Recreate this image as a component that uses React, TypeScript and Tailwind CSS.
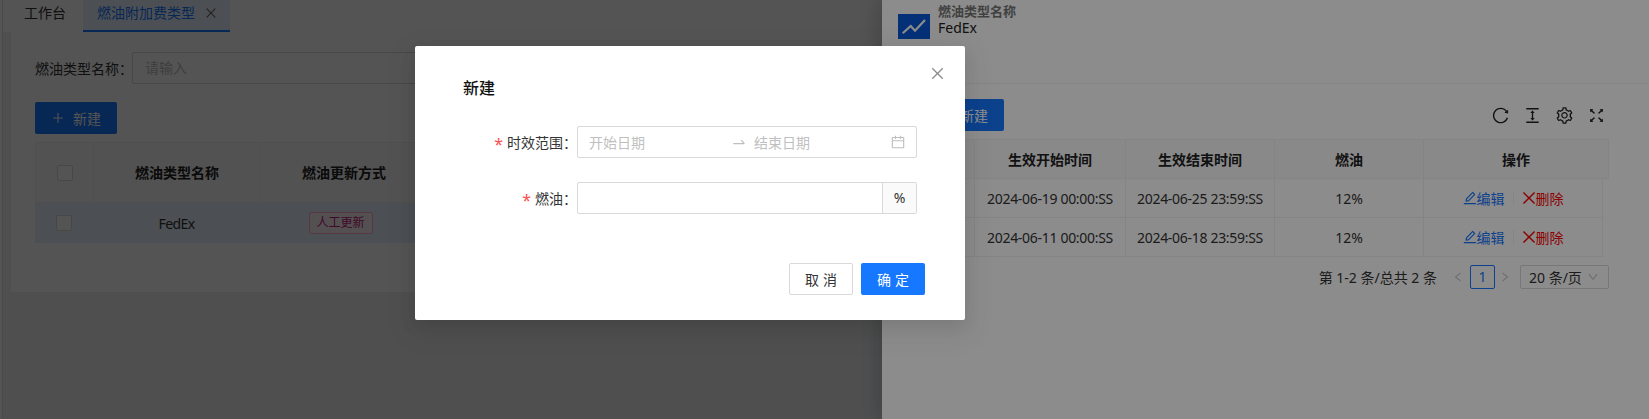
import React from "react";
import {
  AiOutlineClose,
  AiOutlinePlus,
  AiOutlineCalendar,
  AiOutlineSwapRight,
  AiOutlineReload,
  AiOutlineColumnHeight,
  AiOutlineSetting,
  AiOutlineFullscreen,
  AiOutlineEdit,
  AiOutlineLeft,
  AiOutlineRight,
  AiOutlineDown,
} from "react-icons/ai";

const rows = [
  ["2024-06-19 00:00:SS", "2024-06-25 23:59:SS"],
  ["2024-06-11 00:00:SS", "2024-06-18 23:59:SS"],
];

function Check() {
  return <span className="block w-4 h-4 rounded-[2px] border border-[#d9d9d9] bg-white" />;
}

function Base() {
  return (
    <div className="flex w-full h-full">
      <div className="w-[3px] shrink-0 bg-white border-r border-[#e4e4e4]" />
      <div className="flex flex-col flex-1">
        <div className="flex h-8 shrink-0 bg-white">
          <div className="w-[80px] pl-[21px] pt-[3px] text-[14px] leading-5 text-[#333]">工作台</div>
          <div className="flex items-start w-[147px] pl-[14px] pt-[3px] h-8 bg-[#e6f4ff] border-b-2 border-[#1677ff] text-[#1677ff] text-[14px] leading-5">
            <span>燃油附加费类型</span>
            <AiOutlineClose className="ml-[9px] mt-[3px] text-[14px] text-[#666]" />
          </div>
        </div>
        <div className="pl-2 pt-0">
          <div className="w-[1000px] h-[260px] bg-white pl-[24px] pt-5">
            <div className="flex items-center h-8">
              <span className="w-[97px] shrink-0 whitespace-nowrap text-[14px] text-[#333]">燃油类型名称：</span>
              <div className="w-[400px] h-8 border border-[#d9d9d9] rounded-[2px] px-3 text-[14px] leading-[30px] text-[#bfbfbf]">请输入</div>
            </div>
            <button className="flex items-center justify-center gap-2 mt-[18px] w-[82px] h-8 bg-[#1677ff] rounded-[2px] text-white text-[14px]">
              <AiOutlinePlus className="text-[14px]" />
              新建
            </button>
            <div className="mt-2 flex h-[61px] bg-[#fafafa] border border-[#f0f0f0] w-[700px] text-[14px] font-semibold text-[#222]">
              <div className="w-[58px] flex items-center justify-center border-r border-[#f0f0f0]"><Check /></div>
              <div className="w-[167px] flex items-center justify-center border-r border-[#f0f0f0]">燃油类型名称</div>
              <div className="w-[167px] flex items-center justify-center border-r border-[#f0f0f0]">燃油更新方式</div>
            </div>
            <div className="flex h-10 bg-[#e6f4ff] w-[700px] text-[14px] text-[#333]">
              <div className="w-[58px] flex items-center justify-center"><Check /></div>
              <div className="w-[167px] flex items-center justify-center tracking-[-0.6px]">FedEx</div>
              <div className="w-[167px] flex items-center justify-center pr-[6px]">
                <span className="w-16 h-[22px] border border-[#ffadd2] bg-[#fff0f6] rounded-[2px] text-[#c41d7f] text-[12px] leading-5 text-center">人工更新</span>
              </div>
            </div>
          </div>
        </div>
      </div>
    </div>
  );
}

function Drawer() {
  const line = "border-r border-[#f0f0f0]";
  return (
    <div className="absolute top-0 right-0 bottom-0 w-[767px] bg-white shadow-[-6px_0_16px_rgba(0,0,0,0.15)]">
      <div className="h-[84px] border-b border-[#f0f0f0] pl-4 flex items-start">
        <svg viewBox="0 0 32 25" className="w-8 h-[25px] mt-[14px] shrink-0">
          <rect width="32" height="25" fill="#0958d9" />
          <path d="M4.7 19.3 L12.7 12 L17 16.7 L27 6" fill="none" stroke="#ffffff" strokeWidth="2.2" />
        </svg>
        <div className="ml-2 text-[14px]">
          <div className="text-[13px] leading-4 mt-[3px] font-semibold text-[#777]">燃油类型名称</div>
          <div className="leading-5 text-[#222] mt-[-1px]">FedEx</div>
        </div>
      </div>
      <div className="pl-4 pr-10 pt-[15px]">
        <div className="flex items-center h-8">
          <button className="flex items-center justify-end gap-2 pr-4 w-[106px] h-8 bg-[#1677ff] rounded-[2px] text-white text-[14px]">
            <AiOutlinePlus />
            新建
          </button>
          <div className="ml-auto flex items-center gap-[13px] mr-[3px] text-[19px] text-[#222]">
            <AiOutlineReload />
            <AiOutlineColumnHeight />
            <AiOutlineSetting />
            <AiOutlineFullscreen />
          </div>
        </div>
        <div className="mt-2 flex h-10 bg-[#fafafa] border border-[#f0f0f0] text-[14px] font-semibold text-[#222]">
          <div className={`w-[76px] ${line}`} />
          <div className={`w-[151px] flex items-center justify-center ${line}`}>生效开始时间</div>
          <div className={`w-[149px] flex items-center justify-center ${line}`}>生效结束时间</div>
          <div className={`w-[149px] flex items-center justify-center ${line}`}>燃油</div>
          <div className="flex-1 flex items-center justify-center">操作</div>
        </div>
        {rows.map((r) => (
          <div key={r[0]} className="flex h-[39px] mr-[6px] border-x border-b border-[#f0f0f0] text-[14px] text-[#333]">
            <div className={`w-[76px] ${line}`} />
            <div className={`w-[151px] flex items-center justify-center tracking-[-0.3px] ${line}`}>{r[0]}</div>
            <div className={`w-[149px] flex items-center justify-center tracking-[-0.3px] ${line}`}>{r[1]}</div>
            <div className={`w-[149px] flex items-center justify-center ${line}`}>12%</div>
            <div className="flex-1 flex items-center justify-center">
              <span className="flex items-center text-[#1677ff]"><AiOutlineEdit className="text-[16px] -mx-px" />编辑</span>
              <span className="w-px h-[14px] bg-[#f0f0f0] mx-2" />
              <span className="flex items-center text-[#ff0000]"><AiOutlineClose className="text-[18px] -mx-[2px]" />删除</span>
            </div>
          </div>
        ))}
        <div className="flex items-center justify-end h-6 mt-2 text-[14px] text-[#333]">
          <span>第 1-2 条/总共 2 条</span>
          <AiOutlineLeft className="ml-[15px] text-[12px] text-[#bfbfbf]" />
          <span className="ml-[6px] w-[25px] h-6 border border-[#1677ff] rounded-[2px] text-[#1677ff] text-center leading-[22px]">1</span>
          <AiOutlineRight className="ml-[4px] text-[12px] text-[#bfbfbf]" />
          <span className="ml-[9px] flex items-center w-[89px] h-6 border border-[#d9d9d9] rounded-[2px] pl-2">
            20 条/页
            <AiOutlineDown className="ml-[5px] text-[12px] text-[#bfbfbf]" />
          </span>
        </div>
      </div>
    </div>
  );
}

function Star() {
  return <span className="text-[#ff4d4f] mr-1 text-[16px] leading-none align-[-2px]">*</span>;
}

function Modal() {
  return (
    <div className="absolute left-[415px] top-[46px] w-[550px] h-[274px] bg-white rounded-[2px] shadow-[0_6px_16px_rgba(0,0,0,0.08),0_9px_28px_8px_rgba(0,0,0,0.05)]">
      <AiOutlineClose className="absolute right-[19px] top-[19px] text-[17px] text-[#8c8c8c]" />
      <div className="pl-[48px] pt-[29px] text-[16px] leading-[26px] font-medium text-[#111]">新建</div>
      <div className="mt-[25px] pl-[48px] pr-[48px]">
        <div className="flex items-center h-8">
          <label className="w-[114px] text-right text-[14px] text-[#333]"><Star />时效范围：</label>
          <div className="flex items-center flex-1 h-8 border border-[#d9d9d9] rounded-[2px] pl-[11px] pr-[10px] text-[14px] text-[#bfbfbf]">
            <span className="w-[142px]">开始日期</span>
            <AiOutlineSwapRight className="text-[16px] text-[#bfbfbf]" />
            <span className="ml-[7px]">结束日期</span>
            <AiOutlineCalendar className="ml-auto text-[16px]" />
          </div>
        </div>
        <div className="flex items-center h-8 mt-6">
          <label className="w-[114px] text-right text-[14px] text-[#333]"><Star />燃油：</label>
          <div className="flex flex-1 h-8 border border-[#d9d9d9] rounded-[2px]">
            <div className="flex-1" />
            <div className="w-[34px] border-l border-[#d9d9d9] bg-[#fafafa] text-center text-[14px] leading-[30px] text-[#333]">%</div>
          </div>
        </div>
      </div>
      <div className="flex justify-end gap-2 mt-[49px] pr-10">
        <button className="w-16 h-8 border border-[#d9d9d9] bg-white rounded-[2px] pl-1 text-[14px] text-[#333] tracking-[4px]">取消</button>
        <button className="w-16 h-8 bg-[#1677ff] rounded-[2px] pl-1 text-[14px] text-white tracking-[4px]">确定</button>
      </div>
    </div>
  );
}

export default function App() {
  return (
    <div className="relative w-[1649px] h-[419px] overflow-hidden bg-[#f0f2f5] font-['Noto_Sans','Noto_Sans_CJK_SC',sans-serif]">
      <Base />
      <div className="absolute inset-0 bg-black/40" />
      <Drawer />
      <div className="absolute inset-0 bg-black/45" />
      <Modal />
    </div>
  );
}
